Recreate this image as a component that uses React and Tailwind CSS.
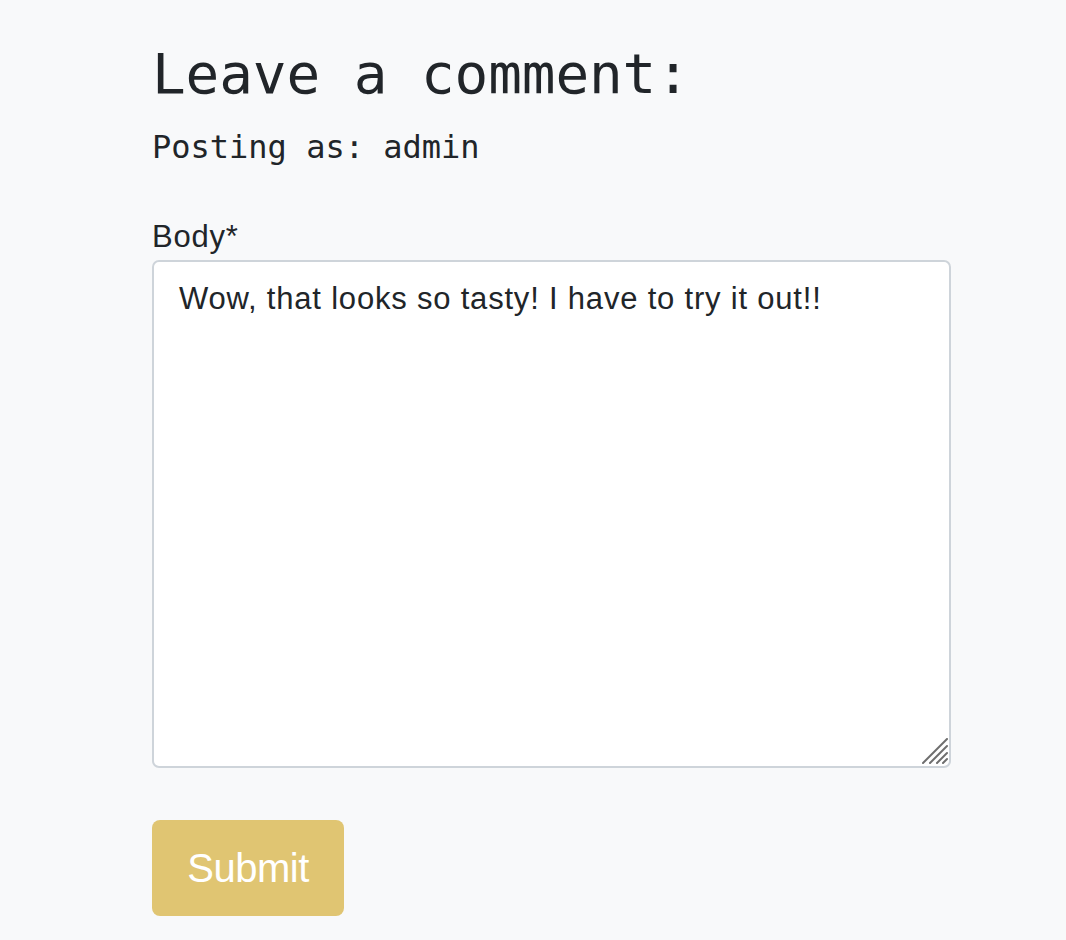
import React from 'react';

const ResizeGrip = () => (
  <svg
    width="26"
    height="26"
    viewBox="0 0 26 26"
    className="absolute right-[3px] bottom-[4px] pointer-events-none"
  >
    <g stroke="#6e6e6e" strokeWidth="2" strokeLinecap="round">
      <line x1="1" y1="25" x2="25" y2="1" />
      <line x1="8" y1="25" x2="25" y2="8" />
      <line x1="15" y1="25" x2="25" y2="15" />
      <line x1="21" y1="25" x2="25" y2="21" />
    </g>
  </svg>
);

const App = () => {
  return (
    <div className="min-h-[940px] w-full bg-[#f8f9fa] text-[#212529]">
      <div className="w-[799px] ml-[152px] pt-[40px] flex flex-col">
        {/* Heading */}
        <h2 className="text-[56px] leading-[1.2] font-normal font-['DejaVu_Sans_Mono',monospace] tracking-[-0.1px]">
          Leave a comment:
        </h2>
        <p className="mt-[16px] text-[32px] leading-[1.5] font-['DejaVu_Sans_Mono',monospace]">
          Posting as: admin
        </p>

        <form className="mt-[44px] flex flex-col font-['Liberation_Sans',Arial,sans-serif]">
          <label htmlFor="body" className="text-[31px] leading-[1.4] tracking-[0.8px] mb-[1px]">
            Body*
          </label>
          <div className="relative">
            <textarea
              id="body"
              defaultValue="Wow, that looks so tasty! I have to try it out!!"
              className="block w-full h-[508px] resize-none bg-white border-2 border-[#ced4da] rounded-[7px] px-[25px] py-[14px] text-[31px] leading-[1.5] tracking-[0.8px] text-[#212529] outline-none"
            />
            <ResizeGrip />
          </div>
          <div className="mt-[52px]">
            <button
              type="button"
              className="w-[192px] h-[96px] bg-[#e0c572] rounded-[8px] text-white text-[40px] tracking-[-0.5px]"
            >
              Submit
            </button>
          </div>
        </form>
      </div>
    </div>
  );
};

export default App;
